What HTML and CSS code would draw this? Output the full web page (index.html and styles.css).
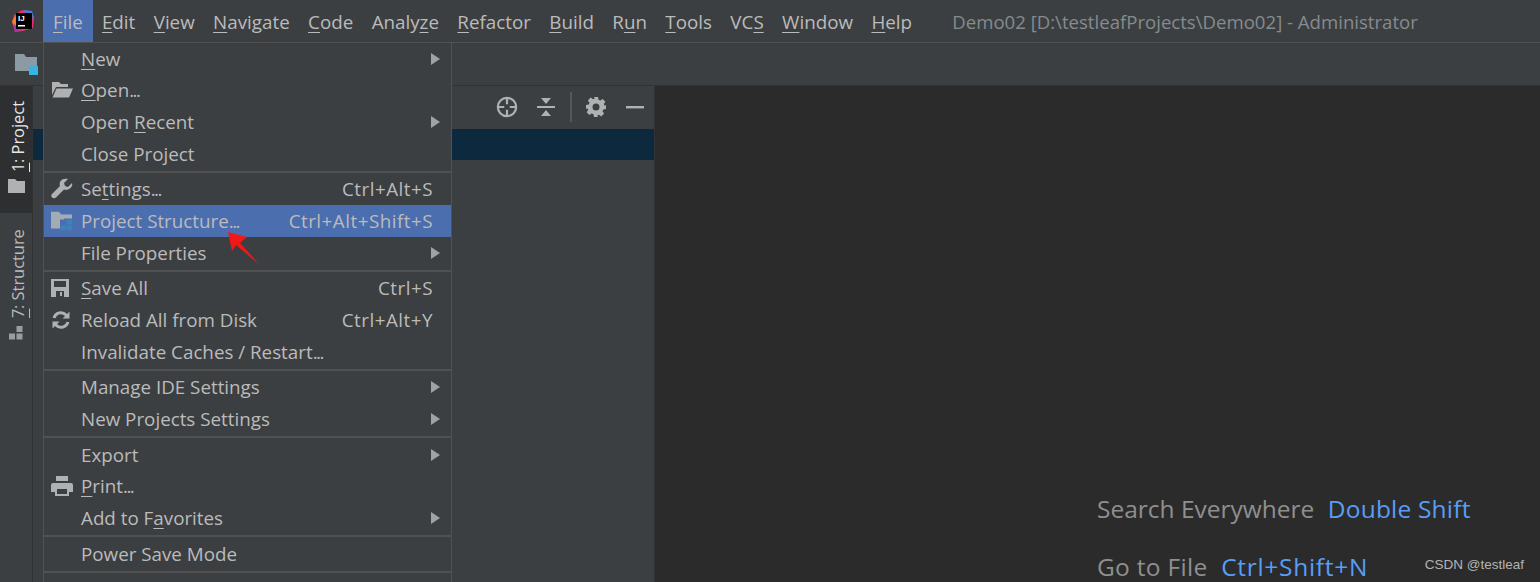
FILE: index.html
```html
<!DOCTYPE html>
<html lang="en">
<head>
<meta charset="utf-8">
<title>Demo02 - IntelliJ IDEA</title>
<link rel="stylesheet" href="styles.css">
</head>
<body>
<div class="app">
  <header class="menubar">
    <svg class="logo" width="26" height="26" viewBox="0 0 26 26">
      <path d="M4 7 L12 2 L21 3 L24 10 L23 20 L13 23 L5 24 L2 14Z" fill="#e0336f"/>
      <path d="M2 14 L5 8 L9 12 L6 20Z" fill="#f58220"/>
      <path d="M14 2 L22 3 L24 10 L16 8Z" fill="#3a7fe0"/>
      <path d="M5 24 L4 16 L10 22Z" fill="#8a3fc0"/>
      <rect x="6" y="5" width="16" height="16" fill="#000"/>
      <rect x="8" y="17" width="7" height="1.500" fill="#fff"/>
      <text x="8" y="13" class="logo-text">IJ</text>
    </svg>
    <nav class="menus">
      <span class="menu active"><u>F</u>ile</span>
      <span class="menu"><u>E</u>dit</span>
      <span class="menu"><u>V</u>iew</span>
      <span class="menu"><u>N</u>avigate</span>
      <span class="menu"><u>C</u>ode</span>
      <span class="menu">Analy<u>z</u>e</span>
      <span class="menu"><u>R</u>efactor</span>
      <span class="menu"><u>B</u>uild</span>
      <span class="menu">R<u>u</u>n</span>
      <span class="menu"><u>T</u>ools</span>
      <span class="menu">VC<u>S</u></span>
      <span class="menu"><u>W</u>indow</span>
      <span class="menu"><u>H</u>elp</span>
    </nav>
    <span class="title">Demo02 [D:\testleafProjects\Demo02] - Administrator</span>
  </header>
  <div class="toolbar">
    <svg width="23" height="21" viewBox="0 0 23 21">
      <path d="M0 0h9l2 3h11v9h-8v5H0z" fill="#8c9aa3"/>
      <rect x="14" y="12" width="9" height="9" fill="#3bb3e0"/>
    </svg>
  </div>
  <div class="workspace">
    <aside class="strip">
      <div class="tab tab-active">
        <span class="tab-text"><u>1</u>: Project</span>
        <svg width="17" height="14" viewBox="0 0 17 14"><path d="M0 0h7l2 2h8v12H0z" fill="#afb1b3"/></svg>
      </div>
      <div class="tab">
        <span class="tab-text"><u>7</u>: Structure</span>
        <svg width="14" height="14" viewBox="0 0 14 14"><path d="M7.500 0h6v6h-6zM0 7.500h6v6H0zM7.500 7.500h6v6h-6z" fill="#9a9c9e"/></svg>
      </div>
    </aside>
    <section class="panel">
      <div class="panel-head">
        <svg width="22" height="22" viewBox="0 0 24 24" fill="none" stroke="#afb1b3" stroke-width="2.400"><circle cx="12" cy="12" r="10"/><path d="M12 2v7M12 15v7M2 12h7M15 12h7"/></svg>
        <svg class="act-collapse" width="18" height="20" viewBox="0 0 18 20"><path d="M0 9h18v2H0z" fill="#afb1b3"/><path d="M4 1h10l-5 6zM4 19h10l-5-6z" fill="#afb1b3"/></svg>
        <i class="vline"></i>
        <svg width="20" height="20" viewBox="0 0 20 20"><path fill-rule="evenodd" d="M8 0h4l.5 2.700 1.800.8 2.300-1.600 2.800 2.800-1.600 2.300.8 1.800L20 8v4l-2.700.5-.8 1.800 1.600 2.300-2.800 2.800-2.300-1.600-1.800.8L12 20H8l-.5-2.700-1.800-.8-2.300 1.600-2.800-2.800 1.600-2.300-.8-1.800L0 12V8l2.700-.5.8-1.800L1.900 3.400l2.800-2.800 2.300 1.600 1.800-.8zM10 6.500a3.500 3.500 0 1 0 0 7 3.500 3.500 0 0 0 0-7z" fill="#afb1b3"/></svg>
        <svg class="act-hide" width="18" height="20" viewBox="0 0 18 20"><rect x="0" y="9" width="18" height="2.400" fill="#afb1b3"/></svg>
      </div>
      <div class="selected-row"></div>
    </section>
    <main class="editor">
      <p class="hint">Search Everywhere <b>Double Shift</b></p>
      <p class="hint hint-file">Go to File <b class="wide">Ctrl+Shift+N</b></p>
    </main>
  </div>
  <div class="dropdown">
    <div class="item"><span class="label"><u>N</u>ew</span><i class="arrow"></i></div>
    <div class="item">
      <svg class="ico" width="22" height="18" viewBox="0 0 22 18"><path d="M1 1h7l2 2h7v3H5L1 14z" fill="#afb1b3"/><path d="M5.500 7.500H22l-4 9H1.500z" fill="#afb1b3"/></svg>
      <span class="label"><u>O</u>pen<span class="dots">...</span></span></div>
    <div class="item"><span class="label">Open <u>R</u>ecent</span><i class="arrow"></i></div>
    <div class="item"><span class="label">Close Project</span></div>
    <hr class="sep">
    <div class="item">
      <svg class="ico" width="22" height="22" viewBox="0 0 22 22"><path d="M21 5l-4 4-3-1-1-3 4-4c-3-1-7 0-8 3-.5 1.500-.5 3 0 4L1 16c-1 1-1 2.500 0 3.500s3 1 4 0l8-8c1 .5 2.500.5 4 0 3-1 5-4 4-6.500z" fill="#afb1b3"/></svg>
      <span class="label">Se<u>t</u>tings<span class="dots">...</span></span><span class="key">Ctrl+Alt+S</span></div>
    <div class="item hot">
      <svg class="ico" width="22" height="19" viewBox="0 0 22 19"><path d="M0 0h8l2 3h11v4h-8v1H9v9H0z" fill="#a3abb5"/><path d="M16 8h5v5h-5zM10 14h5v5h-5zM16 14h5v5h-5z" fill="#3585c0"/></svg>
      <span class="label">Project Structure<span class="dots">...</span></span><span class="key">Ctrl+Alt+Shift+S</span></div>
    <div class="item"><span class="label">File Properties</span><i class="arrow"></i></div>
    <hr class="sep">
    <div class="item">
      <svg class="ico" width="18" height="18" viewBox="0 0 18 18"><path fill-rule="evenodd" d="M0 0h18v18H0zM3 2v6h12V2zM5 12v6h8v-6zM9 13h2v4H9z" fill="#afb1b3"/></svg>
      <span class="label"><u>S</u>ave All</span><span class="key">Ctrl+S</span></div>
    <div class="item">
      <svg class="ico" width="20" height="20" viewBox="0 0 20 20" fill="none" stroke="#afb1b3" stroke-width="3"><path d="M3 8a7 7 0 0 1 12-3l2 2M17 12a7 7 0 0 1-12 3l-2-2"/><path d="M18.500 1.500v7h-7zM1.500 18.500v-7h7z" fill="#afb1b3" stroke="none"/></svg>
      <span class="label">Reload All from Disk</span><span class="key">Ctrl+Alt+Y</span></div>
    <div class="item"><span class="label">Invalidate Caches / Restart<span class="dots">...</span></span></div>
    <hr class="sep">
    <div class="item"><span class="label">Manage IDE Settings</span><i class="arrow"></i></div>
    <div class="item"><span class="label">New Projects Settings</span><i class="arrow"></i></div>
    <hr class="sep">
    <div class="item"><span class="label">Export</span><i class="arrow"></i></div>
    <div class="item">
      <svg class="ico" width="22" height="20" viewBox="0 0 22 20"><path fill-rule="evenodd" d="M5 0h12v5H5zM2 7h18a2 2 0 0 1 2 2v7h-4v4H4v-4H0V9a2 2 0 0 1 2-2zM6 13v5h10v-5z" fill="#afb1b3"/></svg>
      <span class="label"><u>P</u>rint<span class="dots">...</span></span></div>
    <div class="item"><span class="label">Add to F<u>a</u>vorites</span><i class="arrow"></i></div>
    <hr class="sep">
    <div class="item"><span class="label">Power Save Mode</span></div>
    <hr class="sep">
  </div>
  <svg class="pointer" width="36" height="44" viewBox="0 0 36 44"><path d="M2 6 L21 11 L14 17 L34 39 L10 19 L6 25z" fill="#f01818"/></svg>
  <span class="watermark">CSDN @testleaf</span>
</div>
</body>
</html>
```

FILE: styles.css
```css
* { box-sizing: border-box; }
html, body { margin: 0; height: 100%; overflow: hidden; }
body { background: #3c3f41; color: #bbbbbb; font-family: "Open Sans", "Noto Sans", sans-serif; font-size: 18.800px; }
.app { position: relative; width: 1540px; height: 582px; overflow: hidden; display: flex; flex-direction: column; }
u { text-underline-offset: 3px; text-decoration-thickness: 1px; }

.menubar { height: 43px; flex: none; display: flex; align-items: center; border-bottom: 1px solid #515151; padding-left: 10px; }
.logo { flex: none; margin-right: 7px; }
.logo-text { font: bold 8px "Liberation Sans", sans-serif; fill: #fff; }
.menus { display: flex; align-self: stretch; }
.menu { display: flex; align-items: center; padding: 1px 9.200px 0; }
.menu.active { background: #4b6eaf; padding: 1px 10px 0; }
.title { margin-left: 31px; padding-top: 1px; color: #858b8e; font-size: 18.600px; }

.toolbar { height: 43px; flex: none; display: flex; align-items: center; padding-left: 15px; border-bottom: 1px solid #323232; }

.workspace { flex: 1; display: flex; min-height: 0; }
.strip { width: 33px; flex: none; border-right: 1px solid #323232; }
.tab { display: flex; flex-direction: column; align-items: center; gap: 8px; padding: 14px 0 13px; }
.tab-active { background: #2d2f30; color: #e8e8e8; height: 127px; margin-bottom: 3px; gap: 7px; }
.tab-text { writing-mode: vertical-rl; transform: rotate(180deg); font-size: 16.400px; line-height: 32px; height: 72px; margin-left: 3px; white-space: nowrap; display: flex; align-items: center; }
.tab:not(.tab-active) .tab-text { height: 88px; }
.panel { width: 622px; flex: none; border-right: 1px solid #323232; }
.panel-head { height: 43px; display: flex; align-items: center; justify-content: flex-end; padding: 0 10px 2px 0; }
.act-collapse { margin-left: 19px; }
.act-hide { margin-left: 20px; }
.vline { width: 2px; height: 30px; background: #555759; margin: 0 14px 0 15px; }
.selected-row { height: 31px; background: #0d293e; }
.editor { flex: 1; background: #2b2b2b; position: relative; padding: 405px 0 0 442px; color: #8f8f8f; font-size: 24.500px; }
.hint { margin: 0 0 23px; white-space: nowrap; line-height: 35px; }
.hint-file { letter-spacing: .3px; }
.hint b { font-weight: 400; color: #589df6; margin-left: 7px; letter-spacing: .2px; }
.hint b.wide { letter-spacing: .7px; }

.dropdown { position: absolute; left: 43px; top: 42px; width: 409px; height: 540px; background: #3c3f41; border: 1px solid #515151; border-bottom: 0; }
.item { position: relative; height: 31.670px; display: flex; align-items: center; padding: 0 18px 0 37px; white-space: nowrap; }
.item .ico { position: absolute; left: 7px; top: 50%; transform: translateY(-50%); }
.item.hot { background: #4b6eaf; }
.label { flex: 1; }
.dots { letter-spacing: -1.500px; }
.key { margin-left: auto; letter-spacing: .5px; }
.arrow { width: 0; height: 0; margin-right: -7px; border-left: 9px solid #a0a2a4; border-top: 6px solid transparent; border-bottom: 6px solid transparent; }
.sep { height: 2px; margin: 1px 0; border: 0; background: #515151; }

.pointer { position: absolute; left: 226px; top: 226px; }
.watermark { position: absolute; right: 16px; top: 557px; font: 13.500px "Liberation Sans", sans-serif; color: #b4b4b4; }
```
